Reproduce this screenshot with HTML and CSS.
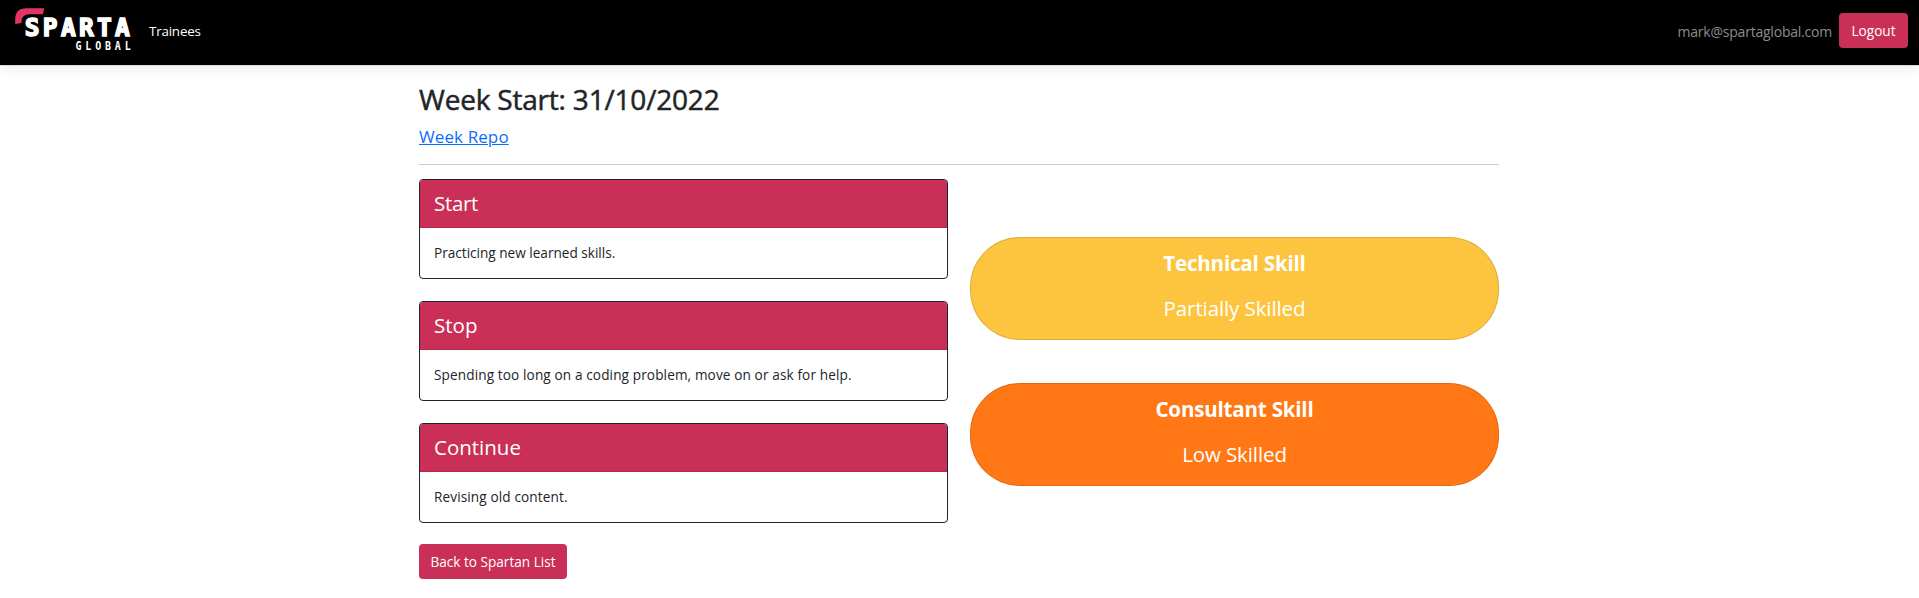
FILE: index.html
```html
<!DOCTYPE html>
<html lang="en">
<head>
<meta charset="utf-8">
<title>Week Start: 31/10/2022</title>
<link rel="stylesheet" href="styles.css">
</head>
<body>
<header class="navbar">
  <svg class="logo" width="118" height="52" viewBox="0 0 118 52">
    <path class="logo-mark" d="M3.2 23V18.5Q3.2 7.2 14.5 7.2H32.2L31 13.3H17.5Q9.5 13.3 9.5 21V22Z"/>
    <text class="logo-name" x="12.8" y="35.3" textLength="105" lengthAdjust="spacing">SPARTA</text>
    <text class="logo-sub" transform="translate(63.5 49) scale(.8 1)" textLength="69" lengthAdjust="spacing">GLOBAL</text>
  </svg>
  <a class="nav-link">Trainees</a>
  <span class="user">mark@spartaglobal.com</span>
  <a class="btn logout">Logout</a>
</header>
<main class="container">
  <h2 class="title">Week Start: 31/10/2022</h2>
  <div class="repo"><a class="repo-link" href="#">Week Repo</a></div>
  <hr class="rule">
  <div class="columns">
    <div class="cards">
      <section class="card"><h4 class="card-header tight">Start</h4><p class="card-body">Practicing new learned skills.</p></section>
      <section class="card"><h4 class="card-header">Stop</h4><p class="card-body loose">Spending too long on a coding problem, move on or ask for help.</p></section>
      <section class="card"><h4 class="card-header">Continue</h4><p class="card-body loose">Revising old content.</p></section>
    </div>
    <div class="skills">
      <section class="skill partial"><strong class="skill-name">Technical Skill</strong><span class="skill-level">Partially Skilled</span></section>
      <section class="skill low"><strong class="skill-name">Consultant Skill</strong><span class="skill-level">Low Skilled</span></section>
    </div>
  </div>
  <a class="btn back">Back to Spartan List</a>
</main>
</body>
</html>
```
FILE: styles.css
```css
* { box-sizing: border-box; }
body {
  margin: 0;
  background: #fff;
  color: #212529;
  font-family: "Open Sans", "Noto Sans", sans-serif;
  font-size: 14px;
}
.navbar {
  display: flex;
  align-items: center;
  height: 65px;
  padding: 0 11px 3px 12px;
  background: #000;
  box-shadow: 0 1px 0 #dcdcdc, 0 4px 12px rgba(0, 0, 0, .08);
}
.logo { flex: none; overflow: visible; margin-bottom: 8px; }
.logo-mark { fill: #e63462; }
.logo-name, .logo-sub {
  font-family: "DejaVu Sans Mono", monospace;
  font-weight: 700;
  fill: #fff;
}
.logo-name { font-size: 24.5px; stroke: #fff; stroke-width: 1.5; }
.logo-sub { font-size: 12.5px; }
.nav-link { margin-left: 19px; color: #fff; font-size: 13.4px; letter-spacing: -.2px; }
.user { margin-left: auto; margin-right: 7px; color: #8c8c8c; font-size: 14px; letter-spacing: -.22px; }
.btn {
  display: inline-flex;
  align-items: center;
  justify-content: center;
  height: 35px;
  border-radius: 4px;
  background: #ca3057;
  color: #fff;
  font-size: 13.6px;
}
.logout { width: 69px; margin-bottom: 1px; }
.container { width: 1080px; margin: 0 auto 0 419px; }
.title {
  margin: 0;
  padding-top: 14px;
  font-size: 28px;
  font-weight: 500;
  line-height: 40px;
  letter-spacing: -.2px;
  -webkit-text-stroke: .5px #212529;
}
.repo { height: 36px; padding-top: 4px; font-size: 17px; font-weight: 400; line-height: 28px; }
.repo-link { color: #0d6efd; text-decoration: underline; text-decoration-thickness: 1px; letter-spacing: .1px; }
.rule { height: 1px; margin: 9px 0 14px; border: 0; background: #c8c9ca; }
.columns { display: grid; grid-template-columns: 529px 529px; column-gap: 22px; }
.cards { display: grid; row-gap: 22px; }
.card { height: 100px; border: 1px solid #212529; border-radius: 4px; overflow: hidden; }
.card-header {
  height: 48px;
  margin: 0;
  padding: 0 14px;
  border-bottom: 1px solid #b12a4c;
  background: #ca3057;
  color: #fff;
  font-size: 20.5px;
  font-weight: 400;
  line-height: 47px;
}
.tight { letter-spacing: -.3px; }
.card-body { margin: 0; padding: 14px; font-size: 13.6px; line-height: 22px; }
.loose { letter-spacing: .12px; }
.skills { display: flex; flex-direction: column; gap: 43px; padding-top: 58px; }
.skill {
  display: flex;
  flex-direction: column;
  align-items: center;
  height: 103px;
  padding-top: 10px;
  border: 1px solid rgba(0, 0, 0, .125);
  border-radius: 50px;
  color: #fff;
  font-size: 20.5px;
  line-height: 30px;
  letter-spacing: -.1px;
}
.partial { background: #fdc53f; }
.low { background: #ff7815; }
.skill-name { letter-spacing: -.18px; }
.skill-level { margin-top: 15px; }
.back { width: 148px; margin-top: 21px; }
```
